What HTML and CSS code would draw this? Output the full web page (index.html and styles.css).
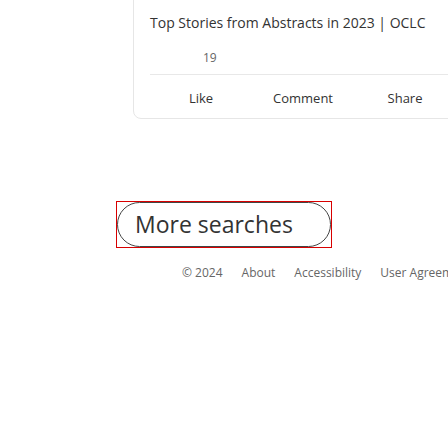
FILE: index.html
```html
<!DOCTYPE html>
<html>
<head>
<meta charset="utf-8">
<link rel="stylesheet" href="styles.css">
</head>
<body>
<div class="page">
  <div class="card">
    <div class="title">Top Stories from Abstracts in 2023 | OCLC</div>
    <div class="count">19</div>
    <div class="divider"></div>
    <div class="actions">
      <span class="act">Like</span>
      <span class="act">Comment</span>
      <span class="act">Share</span>
    </div>
  </div>
  <div class="more-wrap">
    <div class="focus-box"><button class="more">More searches</button></div>
  </div>
  <div class="footer">
    <span>© 2024</span>
    <span>About</span>
    <span>Accessibility</span>
    <span>User Agreement</span>
  </div>
</div>
</body>
</html>
```
FILE: styles.css
```css
html, body {
  margin: 0;
  padding: 0;
  background: #fff;
  overflow: hidden;
  width: 448px;
  height: 448px;
}
.page {
  font-family: "Open Sans", "Noto Sans", sans-serif;
  color: #333;
}
.card {
  margin-left: 133px;
  margin-top: -20px;
  width: 360px;
  border: 1px solid #e6e6e6;
  border-radius: 8px;
  padding: 0 0 0 16px;
  box-sizing: border-box;
  height: 139px;
}
.title {
  padding-top: 32px;
  font-size: 14px;
  line-height: 20px;
  color: #333;
}
.count {
  margin-top: 17px;
  margin-left: 53px;
  font-size: 12px;
  line-height: 16px;
  color: #666;
}
.divider {
  margin-top: 8px;
  height: 1px;
  background: #e8e8e8;
}
.actions {
  display: grid;
  grid-template-columns: 102px 102px 102px;
  margin-top: 14px;
}
.act {
  text-align: center;
  font-size: 13px;
  line-height: 18px;
  color: #333;
}
.more-wrap {
  margin-top: 82px;
  padding-left: 116px;
}
.focus-box {
  display: inline-block;
  border: 1px solid #d80000;
  line-height: 0;
}
.more {
  display: block;
  width: 214px;
  height: 45px;
  margin: 0;
  border: 1px solid #444;
  border-radius: 23px;
  background: #fff;
  font-family: "Open Sans", "Noto Sans", sans-serif;
  font-size: 23px;
  color: #333;
  text-align: left;
  padding: 0 0 2px 17px;
}
.footer {
  margin-top: 17px;
  padding-left: 182px;
  display: flex;
  gap: 19px;
  font-size: 12px;
  line-height: 16px;
  color: #666;
  white-space: nowrap;
}
```
